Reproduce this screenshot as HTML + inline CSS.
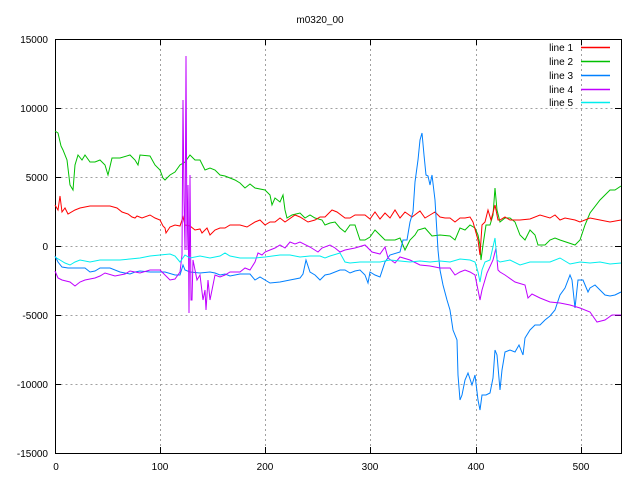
<!DOCTYPE html>
<html><head><meta charset="utf-8"><style>
html,body{margin:0;padding:0;background:#fff;}
svg{display:block}
text{font-family:"Liberation Sans",sans-serif;font-size:10px;fill:#000}
</style></head><body>
<svg width="640" height="480" viewBox="0 0 640 480" xmlns="http://www.w3.org/2000/svg">
<rect width="640" height="480" fill="#fff"/>
<g stroke="#a0a0a0" stroke-width="1" stroke-dasharray="2,3" fill="none">
<path d="M55.5 108.5H621M55.5 177.5H621M55.5 246.5H621M55.5 315.5H621M55.5 384.5H621"/>
<path d="M160.5 39V453M265.5 39V453M370.5 39V453M476.5 39V453M581.5 39V453"/>
</g>
<g stroke="#000" stroke-width="1" fill="none">
<rect x="55.5" y="39.5" width="566" height="414"/>
<path d="M55 108.5h6M55 177.5h6M55 246.5h6M55 315.5h6M55 384.5h6M621 108.5h-6M621 177.5h-6M621 246.5h-6M621 315.5h-6M621 384.5h-6"/>
<path d="M160.5 453v-6M265.5 453v-6M370.5 453v-6M476.5 453v-6M581.5 453v-6M160.5 39v6M265.5 39v6M370.5 39v6M476.5 39v6M581.5 39v6"/>
</g>
<g text-anchor="end">
<text x="48" y="43">15000</text><text x="48" y="112">10000</text><text x="48" y="181">5000</text><text x="48" y="250">0</text><text x="48" y="319">-5000</text><text x="48" y="388">-10000</text><text x="48" y="457">-15000</text>
</g>
<g text-anchor="middle">
<text x="56" y="470">0</text><text x="160" y="470">100</text><text x="265" y="470">200</text><text x="370" y="470">300</text><text x="476" y="470">400</text><text x="581" y="470">500</text>
<text x="320" y="23">m0320_00</text>
</g>
<g fill="none" stroke-width="1">
<polyline stroke="#00c000" points="55,131 58,133 61,146 63,150 67,160 70,185 73,190 75,165 78,155 82,160 85,155 90,162 95,162 100,160 105,165 108,175 112,158 120,158 130,155 135,160 138,165 140,155 150,156 155,165 160,170 163,178 165,180 170,175 175,172 180,165 185,162 190,155 195,160 200,160 205,170 210,168 215,170 220,175 225,176 230,178 235,180 240,183 245,188 250,184 255,188 265,190 270,195 272,205 275,198 280,202 283,195 285,210 287,218 292,215 300,213 305,218 310,215 315,218 322,220 325,225 330,223 335,222 340,228 345,232 350,225 355,225 360,240 365,240 370,237 375,230 385,240 395,240 400,238 405,250 410,240 415,235 418,230 425,228 432,236 440,235 450,236 455,240 460,228 465,230 470,225 475,228 478,235 480,245 481,260 483,245 486,225 490,225 493,215 495,188 497,210 500,222 505,218 510,218 515,222 520,235 525,240 530,230 535,235 538,245 545,245 550,240 555,238 560,240 575,245 580,240 585,225 590,213 600,200 610,190 615,190 621,186"/>
<polyline stroke="#ff0000" points="55,205 58,210 60,196 62,212 65,208 68,214 75,210 80,208 90,206 100,206 110,206 117,208 122,212 128,214 132,217 135,218 137,216 142,218 150,215 155,218 160,220 163,226 165,228 166,233 170,227 175,225 180,226 183,217 185,225 190,226 195,230 200,229 202,233 207,228 210,235 215,230 220,228 225,228 230,225 240,225 247,227 255,222 260,220 265,225 270,222 275,222 280,218 285,222 295,215 300,217 308,222 315,220 320,217 325,217 332,210 337,212 345,218 350,218 355,215 365,215 370,219 375,212 380,219 385,213 390,218 395,210 400,218 405,212 412,217 420,211 425,218 430,215 435,212 440,217 445,218 450,218 455,222 460,218 465,218 470,217 473,222 478,240 480,255 482,225 485,222 488,210 491,220 495,205 498,220 500,220 505,217 510,220 520,220 530,219 540,215 550,218 555,215 560,220 565,218 575,220 580,222 590,218 600,220 610,222 621,220"/>
<polyline stroke="#0080ff" points="55,256 58,262 62,267 68,268 75,268 85,268 90,272 95,271 100,268 110,268 120,272 130,274 135,272 140,271 150,272 165,272 175,275 180,275 183,265 185,270 190,272 200,273 210,272 215,273 220,275 225,274 230,276 240,274 250,274 255,280 260,277 270,283 280,282 290,280 300,278 303,274 306,260 310,272 315,275 320,280 325,275 330,274 340,270 345,270 350,273 355,271 360,270 365,275 368,283 370,272 375,275 380,277 385,262 390,255 400,252 403,240 407,240 410,222 413,212 415,182 418,160 420,140 422,133 424,155 426,175 428,176 430,185 432,175 435,200 438,250 440,270 443,285 447,300 450,310 453,330 457,340 458,375 460,400 462,395 465,380 468,373 472,385 475,375 478,400 480,410 482,395 486,395 490,393 493,378 495,350 497,355 500,390 502,370 505,352 510,350 515,352 519,345 523,355 525,338 530,330 535,325 540,325 545,320 550,316 555,310 560,295 565,288 570,275 572,280 575,308 578,280 583,280 588,292 590,288 595,285 600,290 605,295 610,296 615,295 621,292"/>
<polyline stroke="#c000ff" points="55,271 58,278 62,280 70,282 75,286 80,282 85,280 95,278 100,276 105,273 115,276 125,274 130,271 140,273 150,270 160,270 165,275 170,280 175,279 180,272 182,255 183,100 184,200 185,250 186,56 187,250 188,185 189,313 190,175 191,300 192,300 193,260 195,270 197,280 200,275 203,300 205,290 206,310 208,280 210,300 212,290 215,275 220,277 225,275 230,272 240,272 245,268 250,270 255,262 258,253 262,255 265,252 270,250 275,248 280,245 285,248 290,242 295,244 300,242 310,247 318,252 322,248 330,245 335,248 340,252 345,250 355,248 365,245 372,252 380,254 385,247 388,258 395,263 400,257 410,260 420,265 430,266 440,268 450,268 455,275 460,272 465,270 470,272 475,275 478,290 480,300 482,290 487,273 493,260 496,248 498,270 500,272 505,275 515,282 525,285 528,298 532,294 540,298 545,300 550,302 560,303 570,305 580,308 590,312 597,322 605,320 612,315 621,315"/>
<polyline stroke="#00eeee" points="55,257 60,260 65,263 70,265 75,262 80,260 90,262 100,260 110,260 120,260 130,259 140,258 150,256 160,255 170,254 175,256 180,262 185,255 190,258 200,256 210,258 220,256 225,253 230,256 240,258 250,258 255,258 265,257 280,255 290,255 300,257 310,256 320,256 325,258 330,256 340,253 345,262 350,263 360,262 370,262 380,262 390,260 400,261 410,262 420,261 430,262 440,261 450,262 460,259 470,260 475,262 478,272 480,282 482,270 485,262 490,260 495,238 497,260 500,262 510,260 520,265 530,262 540,262 550,262 560,258 570,264 580,262 590,263 600,262 610,264 621,263"/>
</g>
<g text-anchor="end">
<text x="573" y="51">line 1</text><text x="573" y="65">line 2</text><text x="573" y="79">line 3</text><text x="573" y="93">line 4</text><text x="573" y="106">line 5</text>
</g>
<g stroke-width="1.5" fill="none">
<path d="M581 47.5h29" stroke="#ff0000"/><path d="M581 61.5h29" stroke="#00c000"/><path d="M581 75.5h29" stroke="#0080ff"/><path d="M581 89.5h29" stroke="#c000ff"/><path d="M581 102.5h29" stroke="#00eeee"/>
</g>
</svg>
</body></html>
